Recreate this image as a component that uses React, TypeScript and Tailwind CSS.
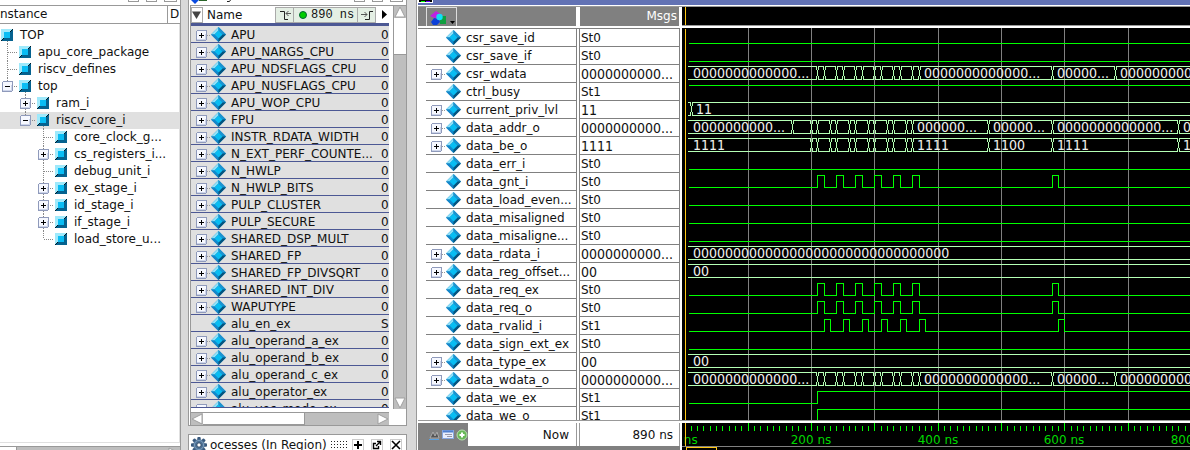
import React from "react";

/* ---------- data ---------- */

type TreeNode = { name: string; level: number; box?: "+" | "-"; last?: boolean; selected?: boolean };

const tree: TreeNode[] = [
  { name: "TOP", level: 0, box: "-" },
  { name: "apu_core_package", level: 1 },
  { name: "riscv_defines", level: 1 },
  { name: "top", level: 1, box: "-", last: true },
  { name: "ram_i", level: 2, box: "+" },
  { name: "riscv_core_i", level: 2, box: "-", last: true, selected: true },
  { name: "core_clock_g...", level: 3 },
  { name: "cs_registers_i...", level: 3, box: "+" },
  { name: "debug_unit_i", level: 3 },
  { name: "ex_stage_i", level: 3, box: "+" },
  { name: "id_stage_i", level: 3, box: "+" },
  { name: "if_stage_i", level: 3, box: "+" },
  { name: "load_store_u...", level: 3, last: true },
];

const objects: [string, string, boolean][] = [
  ["APU", "0", true],
  ["APU_NARGS_CPU", "0", true],
  ["APU_NDSFLAGS_CPU", "0", true],
  ["APU_NUSFLAGS_CPU", "0", true],
  ["APU_WOP_CPU", "0", true],
  ["FPU", "0", true],
  ["INSTR_RDATA_WIDTH", "0", true],
  ["N_EXT_PERF_COUNTE...", "0", true],
  ["N_HWLP", "0", true],
  ["N_HWLP_BITS", "0", true],
  ["PULP_CLUSTER", "0", true],
  ["PULP_SECURE", "0", true],
  ["SHARED_DSP_MULT", "0", true],
  ["SHARED_FP", "0", true],
  ["SHARED_FP_DIVSQRT", "0", true],
  ["SHARED_INT_DIV", "0", true],
  ["WAPUTYPE", "0", true],
  ["alu_en_ex", "S", false],
  ["alu_operand_a_ex", "0", true],
  ["alu_operand_b_ex", "0", true],
  ["alu_operand_c_ex", "0", true],
  ["alu_operator_ex", "0", true],
  ["alu_vec_mode_ex", "0", true],
];

type Wave =
  | { kind: "bit"; start: 0 | 1; edges: number[] }
  | { kind: "bus"; edges: number[]; labels: [number, string][] };

type Signal = { name: string; value: string; wave: Wave };

const low: Wave = { kind: "bit", start: 0, edges: [] };
const high: Wave = { kind: "bit", start: 1, edges: [] };
const bit = (...edges: number[]): Wave => ({ kind: "bit", start: 0, edges });
const bus = (edges: number[], labels: [number, string][]): Wave => ({ kind: "bus", edges, labels });

/* Positions are measured from the left edge of the wave pane. */
const req = bit(135, 142, 154, 161, 173, 180, 192, 199, 211, 218, 230, 237, 370, 376);
const dataEdges = [135, 142, 154, 161, 173, 180, 192, 199, 211, 218, 230, 237, 370, 433];
const addrEdges = [129, 135, 148, 154, 167, 173, 186, 192, 205, 211, 224, 230, 306, 370, 496];
const dataLabels: [number, string][] = [
  [11, "0000000000000..."],
  [242, "0000000000000..."],
  [375, "00000..."],
  [438, "000000000000..."],
];

const signals: Signal[] = [
  { name: "csr_save_id", value: "St0", wave: low },
  { name: "csr_save_if", value: "St0", wave: low },
  { name: "csr_wdata", value: "0000000000...", wave: bus(dataEdges, dataLabels) },
  { name: "ctrl_busy", value: "St1", wave: high },
  { name: "current_priv_lvl", value: "11", wave: bus([9], [[14, "11"]]) },
  {
    name: "data_addr_o",
    value: "0000000000...",
    wave: bus([110, ...addrEdges], [
      [11, "0000000000..."],
      [235, "000000..."],
      [311, "00000..."],
      [375, "0000000000000..."],
      [501, "00000..."],
    ]),
  },
  {
    name: "data_be_o",
    value: "1111",
    wave: bus(addrEdges, [
      [11, "1111"],
      [235, "1111"],
      [311, "1100"],
      [375, "1111"],
      [501, "1100"],
    ]),
  },
  { name: "data_err_i", value: "St0", wave: low },
  { name: "data_gnt_i", value: "St0", wave: req },
  { name: "data_load_even...", value: "St0", wave: low },
  { name: "data_misaligned", value: "St0", wave: low },
  { name: "data_misaligne...", value: "St0", wave: low },
  { name: "data_rdata_i", value: "0000000000...", wave: bus([], [[11, "00000000000000000000000000000000"]]) },
  { name: "data_reg_offset...", value: "00", wave: bus([], [[11, "00"]]) },
  { name: "data_req_ex", value: "St0", wave: req },
  { name: "data_req_o", value: "St0", wave: req },
  {
    name: "data_rvalid_i",
    value: "St1",
    wave: bit(142, 148, 161, 167, 180, 186, 199, 205, 218, 224, 237, 243, 376, 382),
  },
  { name: "data_sign_ext_ex", value: "St0", wave: low },
  { name: "data_type_ex", value: "00", wave: bus([], [[11, "00"]]) },
  { name: "data_wdata_o", value: "0000000000...", wave: bus(dataEdges, dataLabels) },
  { name: "data_we_ex", value: "St1", wave: bit(135) },
  { name: "data_we_o", value: "St1", wave: bit(135) },
];

/* ---------- icons ---------- */

function BoxGlyph({ x, y, sign }: { x: number; y: number; sign: "+" | "-" }) {
  return (
    <g>
      <rect x={x + 0.5} y={y + 0.5} width="10" height="10" rx="1.5" fill="#f6f8ff" stroke="#8f9abb" />
      <path d={`M${x + 1} ${y + 9.5}h9M${x + 9.5} ${y + 4}v6`} stroke="#cdd5ea" />
      <path d={`M${x + 3} ${y + 5.5}h5`} stroke="#000" />
      {sign === "+" && <path d={`M${x + 5.5} ${y + 3}v5`} stroke="#000" />}
    </g>
  );
}

function ExpandButton({ name }: { name: string }) {
  return (
    <button type="button" aria-label={name} className="block h-[15px] w-[15px] shrink-0">
      <svg width="15" height="15" shapeRendering="crispEdges">
        <path d="M11 8.500h4" stroke="#999" strokeDasharray="1 1" />
        <BoxGlyph x={0} y={3} sign="+" />
      </svg>
    </button>
  );
}

function Diamond() {
  return (
    <svg width="15" height="15" viewBox="0 0 15 15" className="shrink-0">
      <path d="M7.500 0L15 7.500L7.500 15L0 7.500z" fill="#0a7fb8" />
      <path d="M7.500 0L0 7.500L3.500 7.500L7.500 3.500z" fill="#8fe0f8" />
      <path d="M7.500 0L15 7.500L11.500 7.500L7.500 3.500z" fill="#1c93d0" />
      <path d="M0 7.500L7.500 15L7.500 11.500L3.500 7.500z" fill="#1487cb" />
      <path d="M15 7.500L7.500 15L7.500 11.500L11.500 7.500z" fill="#05557f" />
      <path d="M7.500 3.500L11.500 7.500L7.500 11.500L3.500 7.500z" fill="#08bdf2" />
    </svg>
  );
}

function BlockIcon({ open }: { open: boolean }) {
  return (
    <svg width="18" height="17" className="shrink-0">
      {open && <path d="M7.500 14v3" stroke="#888" strokeDasharray="1 1" />}
      <rect x="1" y="2" width="12" height="12" fill="#9fe9fb" />
      <path d="M13 2v12H1z" fill="#05628f" />
      <path d="M1 14l3-3M10 5l3-3" stroke="#001a28" />
      <rect x="4" y="5" width="6" height="6" fill="#0abdf4" />
    </svg>
  );
}

function Branch({ node }: { node: TreeNode }) {
  const drawing = (
    <svg width="18" height="17" shapeRendering="crispEdges" className="block">
      <path d={`M7.500 0V${node.last ? 8 : 17}`} stroke="#888" strokeDasharray="1 1" />
      <path d="M8 8.500H17" stroke="#888" strokeDasharray="1 1" />
      {node.box && <BoxGlyph x={2} y={3} sign={node.box} />}
    </svg>
  );
  if (!node.box) return drawing;
  return (
    <button type="button" aria-label={node.name} className="block shrink-0">
      {drawing}
    </button>
  );
}

function Gear() {
  const teeth = [0, 45, 90, 135];
  return (
    <svg width="16" height="16" viewBox="0 0 16 16" className="shrink-0">
      {teeth.map((a) => (
        <rect key={a} x="6.300" y="0" width="3.400" height="16" rx="1" fill="#38587c" transform={`rotate(${a} 8 8)`} />
      ))}
      <circle cx="8" cy="8" r="5.800" fill="#4f7397" />
      <circle cx="8" cy="8" r="4.600" fill="none" stroke="#7c9dbd" />
      <circle cx="8" cy="8" r="2.200" fill="#fff" stroke="#2c4766" />
    </svg>
  );
}

function ScrollArrow({ dir }: { dir: "up" | "down" | "left" | "right" }) {
  const d = {
    up: "M6 1L11 11H1z",
    down: "M1 1H11L6 11z",
    left: "M11 1V11L1 6z",
    right: "M1 1L11 6L1 11z",
  }[dir];
  return (
    <button type="button" aria-label={dir} className="block h-3 w-3 shrink-0">
      <svg width="12" height="12">
        <path d={d} fill="#fff" stroke="#a0a0a0" />
      </svg>
    </button>
  );
}

function WindowButtonEdges() {
  return (
    <div className="flex h-[5px] shrink-0 justify-end gap-[7px] pr-[3px]">
      <span className="h-[2px] w-[11px] border-x border-b border-[#999]" />
      <span className="h-[2px] w-[11px] border-x border-b border-[#999]" />
      <span className="h-[2px] w-[13px] border-x border-b border-[#999]" />
    </div>
  );
}

/* ---------- instance tree ---------- */

function InstancePanel() {
  return (
    <section className="flex w-[181px] shrink-0 flex-col border-r border-[#999] bg-white">
      <WindowButtonEdges />
      <div className="flex h-[19px] shrink-0 border-y border-[#999] leading-[17px]">
        <span className="w-[168px] border-r border-[#999]">nstance</span>
        <span className="pl-[2px]">D</span>
      </div>
      <ul className="flex-1 border-r border-[#e0e0e0] pt-[3px]">
        {tree.map((n) => (
          <li key={n.name} className={n.selected ? "flex h-[17px] bg-[#e0e0e0]" : "flex h-[17px]"}>
            {n.level > 1 && <span className="w-[18px]" />}
            {n.level > 2 && <span className="w-[18px]" />}
            {n.level > 0 && <Branch node={n} />}
            <BlockIcon open={n.box === "-"} />
            <span className="pl-[2px] leading-[17px]">{n.name}</span>
          </li>
        ))}
      </ul>
      <div className="h-1 shrink-0 border-t border-[#e0e0e0]" />
      <div className="flex h-[4px] shrink-0 overflow-hidden border-t border-[#999] bg-[#bebebe]">
        <div className="w-[17px] border-r border-[#999] bg-white" />
        <div className="flex-1" />
        <ScrollArrow dir="right" />
      </div>
    </section>
  );
}

/* ---------- objects ---------- */

function SignalName({ name, expandable }: { name: string; expandable: boolean }) {
  return (
    <span className="flex pt-px pl-[5px]">
      {expandable ? <ExpandButton name={name} /> : <span className="w-[15px]" />}
      <Diamond />
      <span className="h-[15px] pl-[5px] leading-[17px] whitespace-nowrap">{name}</span>
    </span>
  );
}

function ObjectsHeader() {
  return (
    <div className="flex h-[17px] items-center bg-white font-normal">
      <button type="button" aria-label="Sort" className="flex h-[16px] w-3 items-center justify-center border border-[#aaa]">
        <svg width="10" height="8">
          <path d="M0 0.500h9L4.500 8z" fill="#444" />
        </svg>
      </button>
      <span className="flex-1 pl-1 text-left">Name</span>
      <div className="flex h-[16px] border border-[#aaa] bg-[#e4efe4]">
        <button type="button" aria-label="Previous" className="w-[18px] border-r border-[#aaa]">
          <svg width="17" height="14" fill="none" stroke="#222">
            <path d="M4 3.500h4.500v8H12" />
            <path d="M15 5.500h-5M12.500 3l-2.500 2.500l2.500 2.500" stroke="#555" />
          </svg>
        </button>
        <div className="flex w-[63px] items-center gap-1 pl-[5px]">
          <span className="h-2 w-2 shrink-0 rounded-full border border-[#063] bg-[#0c0]" />
          <span className="font-['Liberation_Mono',monospace] whitespace-nowrap">890 ns</span>
        </div>
        <button type="button" aria-label="Next" className="w-[18px] border-l border-[#aaa]">
          <svg width="17" height="14" fill="none" stroke="#222">
            <path d="M7 11.500h4.500v-8H15" />
            <path d="M3 6.500h6M6.500 4l2.500 2.500l-2.500 2.500" stroke="#555" />
          </svg>
        </button>
      </div>
      <svg width="13" height="10">
        <path d="M6 0v9l5-4.500z" fill="#000" />
      </svg>
    </div>
  );
}

function ObjectsPanel() {
  return (
    <section className="flex min-h-0 flex-1 flex-col border-x border-b border-[#999] bg-white pl-px">
      <div className="flex h-[5px] shrink-0 justify-between">
        <svg width="60" height="5">
          <path d="M1 0h8l-4 4z" fill="#0a4be0" />
          <path d="M9 0.500h8" stroke="#286428" />
          <path d="M37 1.500h2.500l1-1.500" stroke="#222" fill="none" />
        </svg>
        <WindowButtonEdges />
      </div>
      <div className="flex min-h-0 flex-1 border-t border-l border-[#999]">
        <div className="flex min-w-0 flex-1 flex-col">
          <div className="min-h-0 flex-1 overflow-hidden border-b border-[#4c5894]">
            <table className="w-full table-fixed border-separate border-spacing-0">
              <colgroup>
                <col />
                <col className="w-2" />
              </colgroup>
              <thead>
                <tr>
                  <th colSpan={2} className="border-b-[3px] border-[#4c5894] p-0">
                    <ObjectsHeader />
                  </th>
                </tr>
              </thead>
              <tbody>
                {objects.map(([name, value, expandable]) => (
                  <tr key={name} className="bg-[#e0e0e0]">
                    <td className="border-b border-[#4c5894] p-0">
                      <div className="h-[16px]">
                        <SignalName name={name} expandable={expandable} />
                      </div>
                    </td>
                    <td className="border-b border-[#4c5894] p-0">
                      <div className="h-[16px] pt-px leading-[17px]">{value}</div>
                    </td>
                  </tr>
                ))}
              </tbody>
            </table>
          </div>
          <div className="mt-1 flex h-[13px] shrink-0 border-t border-[#999] bg-[#bebebe]">
            <ScrollArrow dir="left" />
            <div className="w-[102px] border-r border-b border-[#999] bg-white" />
            <div className="flex-1" />
            <ScrollArrow dir="right" />
          </div>
        </div>
        <div className="ml-1 mb-[16px] flex w-[13px] flex-col border-l border-[#999] bg-[#bebebe]">
          <ScrollArrow dir="up" />
          <div className="h-[37px] border-b border-[#999] bg-white" />
          <div className="flex-1" />
          <ScrollArrow dir="down" />
        </div>
      </div>
    </section>
  );
}

function ProcessesBar() {
  return (
    <section className="flex h-[16px] shrink-0 items-center overflow-hidden border-x border-t border-[#999] bg-white pt-1 pl-[2px]">
      <Gear />
      <span className="pl-[3px] whitespace-nowrap">ocesses (In Region)</span>
      <svg width="18" height="8" className="ml-1 shrink-0">
        <path d="M0 0.500h18M0 3.500h18M0 6.500h18" stroke="#222" strokeDasharray="1 2" />
      </svg>
      <div className="flex flex-1 justify-end gap-[7px] pr-[4px]">
        <button type="button" aria-label="Add" className="h-3 w-3 border border-[#ccc]">
          <svg width="10" height="10" stroke="#000" strokeWidth="2">
            <path d="M5 1v8M1 5h8" />
          </svg>
        </button>
        <button type="button" aria-label="Undock" className="h-3 w-3 border border-[#ccc]">
          <svg width="10" height="10" fill="none" stroke="#000">
            <path d="M4 3.500H1.500v5h5V6M4 6l4.500-4.500M5 1.500h3.500V5" strokeWidth="1.400" />
          </svg>
        </button>
        <button type="button" aria-label="Close" className="h-3 w-3 border border-[#ccc]">
          <svg width="10" height="10" stroke="#000" strokeWidth="1.600">
            <path d="M1 1l8 8M9 1l-8 8" />
          </svg>
        </button>
      </div>
    </section>
  );
}

/* ---------- wave window ---------- */

function SignalTable() {
  return (
    <table className="w-[262px] table-fixed border-separate border-spacing-0">
      <colgroup>
        <col className="w-2" />
        <col className="w-[151px]" />
        <col className="w-[2px]" />
        <col className="w-[101px]" />
      </colgroup>
      <thead>
        <tr>
          <th className="bg-[#808080] p-0" />
          <th className="border-r border-white bg-[#808080] p-0">
            <div className="h-[19px]">
              <button type="button" aria-label="Wave options" className="block h-[19px] w-[31px] border border-b-0 border-[#ddd]">
                <svg width="29" height="18" className="block">
                  <path d="M3 8l6-5l6 4l-5 4z" fill="#c020e0" />
                  <rect x="13" y="8" width="6" height="8" fill="#10a040" />
                  <path d="M4 14l3-4l5 1l1 3l-3 3H6z" fill="#0c40d8" />
                  <circle cx="12.500" cy="9" r="3.200" fill="#10e0f8" />
                  <path d="M23 13h5l-2.500 3z" fill="#000" />
                </svg>
              </button>
            </div>
          </th>
          <th className="bg-white p-0" />
          <th className="border-x border-white bg-[#808080] p-0 text-right font-normal text-white">
            <div className="pr-[2px] leading-[19px]">Msgs</div>
          </th>
        </tr>
        <tr>
          <td colSpan={4} className="border-b border-[#808080] bg-white p-0">
            <div className="h-[2px]" />
          </td>
        </tr>
      </thead>
      <tbody>
        {signals.map((s) => (
          <tr key={s.name}>
            <td className="p-0" />
            <td className="border-r border-b border-[#808080] p-0">
              <div className="h-[17px]">
                <SignalName name={s.name} expandable={s.wave.kind === "bus"} />
              </div>
            </td>
            <td className="p-0" />
            <td className="border-x border-b border-[#808080] p-0">
              <div
                className={
                  s.wave.kind === "bus"
                    ? "h-[17px] pl-px font-['DejaVu_Sans_Condensed','DejaVu_Sans',sans-serif] text-[14px] leading-[18px] whitespace-nowrap"
                    : "h-[17px] pt-px pl-px leading-[17px]"
                }
              >
                {s.value}
              </div>
            </td>
          </tr>
        ))}
      </tbody>
    </table>
  );
}

const FAR = 4000;

function BitWave({ base, start, edges }: { base: number; start: 0 | 1; edges: number[] }) {
  let level = start;
  const y = (l: number) => base + (l ? 2.5 : 14.5);
  let d = `M7 ${y(level)}`;
  edges.forEach((x) => {
    d += `H${x + 0.5}`;
    level = level ? 0 : 1;
    d += `V${y(level)}`;
  });
  return <path d={d + `H${FAR}`} stroke="#00ff00" fill="none" />;
}

function BusWave({ base, edges, labels }: { base: number; edges: number[]; labels: [number, string][] }) {
  const stops = [...edges, FAR];
  let from = 6;
  let d = "";
  stops.forEach((x) => {
    d += `M${from} ${base + 1.5}H${x}M${from} ${base + 14.5}H${x}`;
    from = x + 1;
  });
  edges.forEach((x) => {
    d += `M${x - 0.5} ${base + 1}v4M${x + 1.5} ${base + 1}v4M${x + 0.5} ${base + 5}v6M${x - 0.5} ${base + 11}v4M${x + 1.5} ${base + 11}v4`;
  });
  return (
    <g>
      <path d={d} stroke="#b4ffb4" fill="none" />
      {labels.map(([x, t]) => (
        <text key={x} x={x} y={base + 13} fill="#f0f0f0">
          {t}
        </text>
      ))}
    </g>
  );
}

function WavePlot() {
  const grid = Array.from({ length: 40 }, (_, i) => Math.floor(3 + (i + 1) * 63.3));
  return (
    <svg
      width="100%"
      height="100%"
      shapeRendering="crispEdges"
      className="block bg-black font-['DejaVu_Sans_Condensed','DejaVu_Sans',sans-serif] text-[14px]"
    >
      <path d={grid.map((x) => `M${x + 0.5} 0V2000`).join("")} stroke="#808080" />
      {signals.map((s, i) =>
        s.wave.kind === "bit" ? (
          <BitWave key={s.name} base={1 + i * 18} start={s.wave.start} edges={s.wave.edges} />
        ) : (
          <BusWave key={s.name} base={1 + i * 18} edges={s.wave.edges} labels={s.wave.labels} />
        ),
      )}
      <path d="M3.500 1V2000" stroke="#ffc814" />
    </svg>
  );
}

function TimeRuler() {
  const ticks = Array.from({ length: 400 }, (_, i) => i + 1);
  return (
    <svg width="100%" height="27" shapeRendering="crispEdges" className="block bg-black text-[12px]">
      <path
        d={ticks.map((k) => `M${Math.floor(3 + k * 6.33) + 0.5} ${k % 10 === 0 ? 0 : 3}V8`).join("")}
        stroke="#00ff00"
      />
      <g fill="#00d800" textAnchor="middle">
        {[0, 200, 400, 600, 800, 1000, 1200, 1400].map((t) => (
          <text key={t} x={Math.floor(3 + t * 0.633)} y="21">
            {t} ns
          </text>
        ))}
      </g>
      <path d="M0 23.500H4000" stroke="#808080" />
      <path d="M3.500 0V23M4.500 27V24.500H34.500V27" stroke="#ffc814" fill="none" />
    </svg>
  );
}

function WaveWindow() {
  return (
    <section className="flex min-w-0 flex-1 flex-col border-l border-[#999] bg-white pl-px">
      <div className="h-[5px] shrink-0 bg-[#6272b4]">
        <svg width="16" height="4" className="block">
          <rect width="15" height="3" fill="#fff" />
          <rect x="1" width="13" height="2" fill="#000" />
          <path d="M3 1.500h4" stroke="#0f0" />
          <path d="M8 1.500h4" stroke="#60f" />
        </svg>
      </div>
      <div className="h-[2px] shrink-0 border-b border-[#999]" />
      <div className="flex min-h-0 flex-1 overflow-hidden">
        <div className="shrink-0">
          <SignalTable />
        </div>
        <div className="ml-[2px] flex min-w-0 flex-1 flex-col">
          <div className="h-[18px] shrink-0 bg-black pl-[3px]">
            <div className="h-full border-l border-[#ffc814]" />
          </div>
          <div className="h-[3px] shrink-0 border-t border-[#999]" />
          <div className="min-h-0 flex-1">
            <WavePlot />
          </div>
        </div>
      </div>
      <div className="h-[3px] shrink-0 border-t border-[#999]" />
      <div className="flex h-[27px] shrink-0">
        <div className="flex w-[262px] shrink-0 border-b-4 border-[#808080]">
          <div className="flex w-[50px] items-center gap-[2px] bg-[#808080] pl-[10px]">
            <svg width="12" height="12" className="shrink-0">
              <path d="M2 9l3-6l2 4l2-4l2 6z" fill="#555" stroke="#aaa" />
              <path d="M1 10.500h10" stroke="#58a0e0" />
            </svg>
            <svg width="12" height="12" className="shrink-0">
              <rect x="0.500" y="1.500" width="11" height="8" fill="#e8eefc" stroke="#88a8e0" />
              <path d="M1 2.500h10" stroke="#5080d0" strokeWidth="2" />
              <path d="M3 5.500h7M5 7.500h5" stroke="#99a" />
            </svg>
            <svg width="12" height="12" className="shrink-0">
              <circle cx="6" cy="6" r="5" fill="#68b858" stroke="#b8e0b0" />
              <path d="M6 3.500v5M3.500 6h5" stroke="#fff" strokeWidth="2" />
            </svg>
          </div>
          <div className="flex-1 border-r border-[#999] pr-[7px] text-right leading-[24px]">Now</div>
          <div className="w-[2px]" />
          <div className="w-[101px] border-x border-[#999] pr-[6px] text-right leading-[24px]">890 ns</div>
        </div>
        <div className="ml-[2px] min-w-0 flex-1">
          <TimeRuler />
        </div>
      </div>
    </section>
  );
}

export default function App() {
  return (
    <main className="flex h-screen overflow-hidden bg-[#d9d9d9] font-['DejaVu_Sans',sans-serif] text-[12px] text-[#111]">
      <InstancePanel />
      <div className="mr-[9px] ml-[7px] flex w-[219px] shrink-0 flex-col gap-2">
        <ObjectsPanel />
        <ProcessesBar />
      </div>
      <WaveWindow />
    </main>
  );
}
